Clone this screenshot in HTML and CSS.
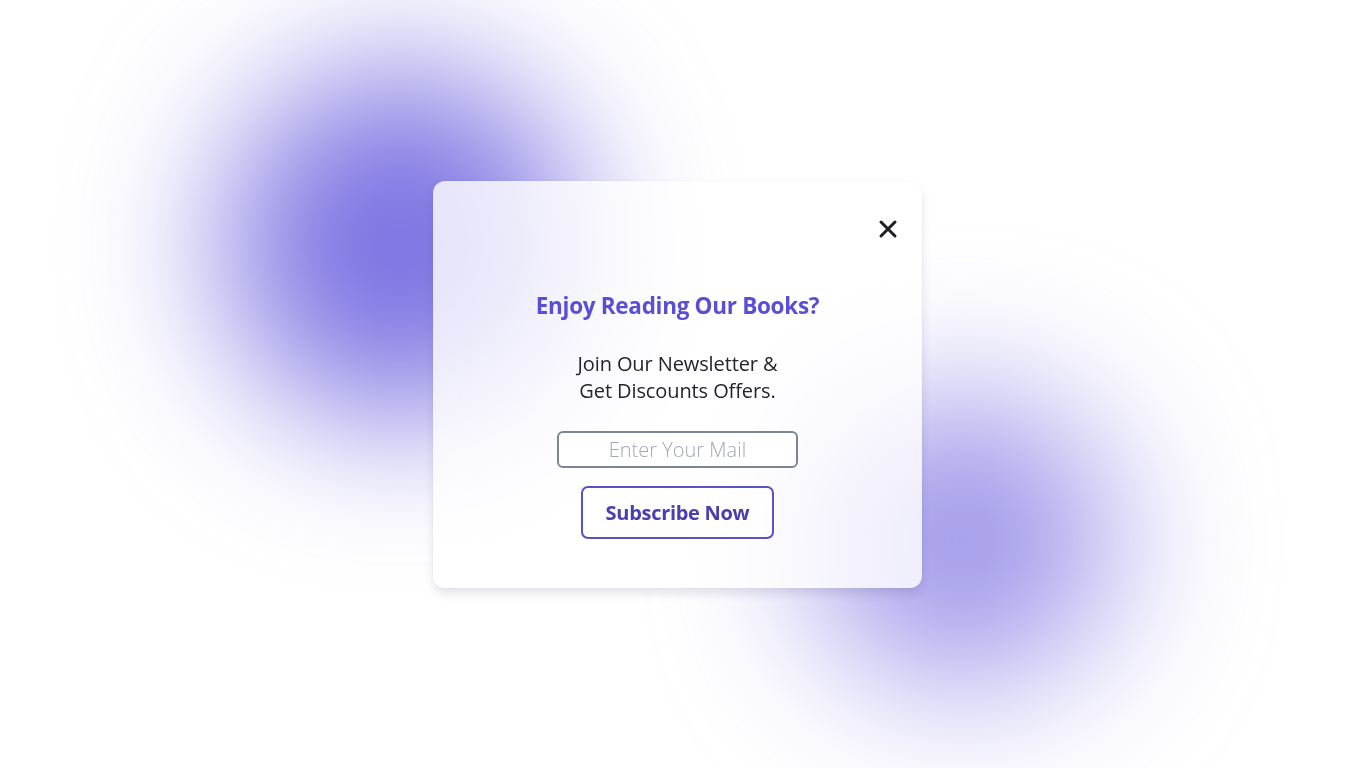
FILE: index.html
```html
<!DOCTYPE html>
<html lang="en">
<head>
<meta charset="utf-8">
<title>Newsletter</title>
<link rel="stylesheet" href="styles.css">
</head>
<body>
<div class="blob blob-a"></div>
<div class="blob blob-b"></div>
<main class="stage">
  <section class="card">
    <div class="card-top">
      <button class="close" aria-label="Close">
        <svg width="20" height="20" viewBox="0 0 20 20"><path d="M3 3 L17 17 M17 3 L3 17" stroke="#1f1f24" stroke-width="3" stroke-linecap="round"/></svg>
      </button>
    </div>
    <h1 class="title">Enjoy Reading Our Books?</h1>
    <p class="lead">Join Our Newsletter &amp;<br>Get Discounts Offers.</p>
    <input class="mail" type="text" placeholder="Enter Your Mail">
    <button class="subscribe">Subscribe Now</button>
  </section>
</main>
</body>
</html>
```
FILE: styles.css
```css
* { box-sizing: border-box; }
html, body { margin: 0; height: 100%; }
body {
  background: #ffffff;
  font-family: "Open Sans", "Noto Sans", sans-serif;
  overflow: hidden;
  position: relative;
}
.blob {
  position: absolute;
  border-radius: 50%;
  filter: blur(75px);
}
.blob-a {
  left: 225px; top: 70px; width: 350px; height: 350px;
  background: #7c73e2;
}
.blob-b {
  left: 810px; top: 395px; width: 305px; height: 290px;
  background: #9f97ea;
}
.stage {
  position: relative;
  height: 100%;
  display: flex;
  align-items: center;
  justify-content: center;
  padding-right: 11px;
}
.card {
  width: 489px;
  height: 407px;
  border-radius: 12px;
  background: rgba(255,255,255,0.8);
  backdrop-filter: blur(20px);
  box-shadow: 0 6px 10px rgba(40,40,80,0.12), 0 0 2px rgba(40,40,80,0.08);
  display: flex;
  flex-direction: column;
  align-items: center;
  padding: 37px 22px 0 22px;
}
.card-top {
  align-self: stretch;
  display: flex;
  justify-content: flex-end;
}
.close {
  border: 0;
  background: none;
  padding: 0;
  width: 24px; height: 22px;
  display: flex; align-items: center; justify-content: center;
  cursor: pointer;
}
.title {
  margin: 51px 0 0;
  font-family: "Open Sans", sans-serif;
  font-weight: 700;
  font-size: 22.5px;
  line-height: 30px;
  color: #5a4fd4;
  letter-spacing: -0.3px;
}
.lead {
  margin: 29px 0 0;
  text-align: center;
  font-size: 20px;
  line-height: 27px;
  color: #24242e;
  letter-spacing: -0.1px;
}
.mail {
  margin-top: 27px;
  width: 241px;
  height: 37px;
  border: 2px solid #7b8596;
  border-radius: 6px;
  background: #fff;
  text-align: center;
  font-family: "Open Sans", sans-serif;
  font-size: 20px;
  font-weight: 300;
  color: #333;
  outline: none;
}
.mail::placeholder { color: #a3a8b6; }
.subscribe {
  margin-top: 18px;
  width: 193px;
  height: 53px;
  border: 2px solid #5b50c4;
  border-radius: 7px;
  background: rgba(255,255,255,0.5);
  font-family: "Open Sans", sans-serif;
  font-weight: 700;
  font-size: 20px;
  color: #4a40ad;
  letter-spacing: -0.3px;
  cursor: pointer;
}
```
